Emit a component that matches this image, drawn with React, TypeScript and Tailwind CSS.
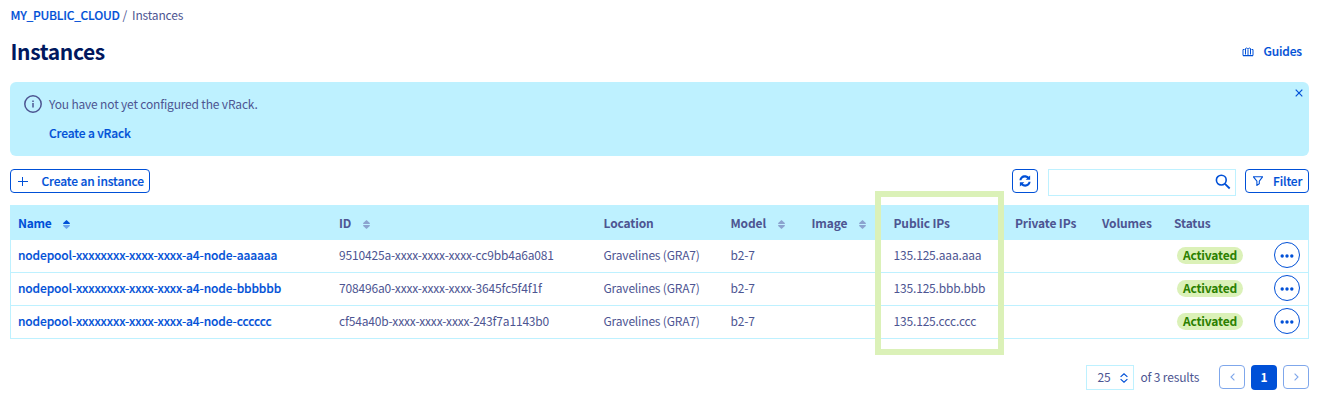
import React from "react";

const instances = [
  { name: "nodepool-xxxxxxxx-xxxx-xxxx-a4-node-aaaaaa", id: "9510425a-xxxx-xxxx-xxxx-cc9bb4a6a081", ip: "135.125.aaa.aaa" },
  { name: "nodepool-xxxxxxxx-xxxx-xxxx-a4-node-bbbbbb", id: "708496a0-xxxx-xxxx-xxxx-3645fc5f4f1f", ip: "135.125.bbb.bbb" },
  { name: "nodepool-xxxxxxxx-xxxx-xxxx-a4-node-cccccc", id: "cf54a40b-xxxx-xxxx-xxxx-243f7a1143b0", ip: "135.125.ccc.ccc" },
];

const columns = "grid grid-cols-[321px_264.5px_127px_81px_82px_121.5px_87px_72px_100px_1fr] items-center";
const strong = "font-medium tracking-[-0.14px] [-webkit-text-stroke:0.15px]";

function Sort({ active = false }: { active?: boolean }) {
  return (
    <svg width="7" height="9" viewBox="0 0 7 9" className="mt-[3px] shrink-0">
      <path d="M3.5 0 L6.8 3 V4 H.2 V3 Z" fill={active ? "#0050d7" : "#8ba3cf"} />
      <path d="M3.5 9 L6.8 6 V5 H.2 V6 Z" fill={active ? "#6ba3ec" : "#8ba3cf"} />
    </svg>
  );
}

function Header({ label, sort }: { label: string; sort?: boolean }) {
  return (
    <div className="flex items-center gap-[12px] pl-[7px] font-bold tracking-[-0.13px]">
      <span>{label}</span>
      {sort && <Sort />}
    </div>
  );
}

export default function App() {
  return (
    <div className="h-[406px] w-[1329px] overflow-hidden bg-white pr-5 pl-2.5 font-['Noto_Sans_CJK_JP','Noto_Sans_CJK_SC',sans-serif] text-[12px] leading-5 tracking-[-0.17px] whitespace-nowrap text-[#4d5592]">
      <nav className="flex h-[30px] items-center pl-[0.5px]">
        <a className="font-medium tracking-[-0.27px] text-[#0050d7] [-webkit-text-stroke:0.15px]">MY_PUBLIC_CLOUD</a>
        <span className="ml-[3px]">/</span>
        <span className="ml-[5px]">Instances</span>
      </nav>

      <header className="flex h-[52px] items-center justify-between pb-[10px]">
        <h1 className="pl-[0.5px] text-[21px] leading-7 font-bold tracking-[-0.35px] text-[#00185e]">Instances</h1>
        <a className={`flex items-center gap-[9px] pr-[7px] text-[#0050d7] ${strong}`}>
          <svg width="12" height="10" viewBox="0 0 12 10" fill="none" stroke="#0050d7" strokeWidth="1" className="mt-px">
            <path d="M2.5 2.5 H1 V8.5 H11 V2.5 H9.5" />
            <path d="M3.5 7.5 V1.5 C4.5 .7 5.5 1 6 2.2 C6.5 1 7.5 .7 8.5 1.5 V7.5 M6 2.5 V8.5" />
            <path d="M1 9 H11" strokeOpacity=".5" />
          </svg>
          Guides
        </a>
      </header>

      <section className="flex h-[74px] justify-between rounded-md bg-[#bef1ff]">
        <div className="flex pt-3 pl-[13px]">
          <svg width="20" height="20" viewBox="0 0 20 20" fill="none" stroke="#4d5592">
            <circle cx="10" cy="10" r="8.2" strokeWidth="1.5" />
            <path d="M10 9 V13.5 M10 6.5 V8" strokeWidth="1.5" />
          </svg>
          <div className="pl-[6px]">
            <p>You have not yet configured the vRack.</p>
            <a className={`mt-[9px] block text-[#0050d7] ${strong}`}>Create a vRack</a>
          </div>
        </div>
        <svg width="8" height="8" viewBox="0 0 8 8" fill="none" stroke="#0050d7" strokeWidth="1.2" className="mt-[7px] mr-1.5">
          <path d="M.7 .7 L7.3 7.3 M7.3 .7 L.7 7.3" />
        </svg>
      </section>

      <div className="mt-[13px] flex h-[27px] items-start">
        <button className={`flex h-6 w-[140px] items-center gap-[13.5px] rounded-[4px] border border-[#0050d7] pl-[7px] text-[#0050d7] ${strong}`}>
          <svg width="10" height="10" viewBox="0 0 10 10" stroke="#0050d7" strokeWidth="1" className="shrink-0">
            <path d="M0 5.5 H10 M4.5 1 V10" />
          </svg>
          Create an instance
        </button>
        <button className="ml-auto flex h-6 w-[26px] items-center justify-center rounded-[4px] border border-[#0050d7]">
          <svg width="12" height="12" viewBox="0 0 512 512" fill="#0050d7">
            <path d="M20 225 C25 105 125 15 250 15 C315 15 370 38 414 76 L475 20 V205 H285 L350 141 C322 119 291 106 252 106 C178 106 120 151 105 225 Z M492 287 C487 407 387 497 262 497 C197 497 142 474 98 436 L37 492 V307 H227 L162 371 C190 393 221 406 260 406 C334 406 392 361 407 287 Z" />
          </svg>
        </button>
        <div className="ml-2.5 flex h-[27px] w-[188px] items-start justify-end border border-[#bef1ff] pt-1 pr-1">
          <svg width="16" height="16" viewBox="0 0 16 16" fill="none" stroke="#0050d7">
            <circle cx="6.3" cy="6.1" r="4.9" strokeWidth="1.6" />
            <path d="M10 9.8 L14.7 14.5" strokeWidth="1.8" />
          </svg>
        </div>
        <button className={`ml-[9px] flex h-6 w-16 items-center gap-[10px] rounded-[4px] border border-[#0050d7] pl-[7px] text-[#0050d7] ${strong}`}>
          <svg width="10" height="10" viewBox="0 0 10 10" fill="none" stroke="#0050d7" strokeWidth="1.1" className="shrink-0">
            <path d="M.3 .7 H9.7 L6.3 5.2 V7.8 L3.9 9.4 V5.2 Z" />
          </svg>
          Filter
        </button>
      </div>

      <section className="relative mt-[9px] h-[134px] border border-t-0 border-[#bef1ff]">
        <div className={`${columns} h-[35px] bg-[#bef1ff] pt-px`}>
          <div className="flex items-center gap-[12px] pl-[7px] font-bold tracking-[-0.3px] text-[#0050d7]">
            Name <Sort active />
          </div>
          <Header label="ID" sort />
          <Header label="Location" />
          <Header label="Model" sort />
          <Header label="Image" sort />
          <Header label="Public IPs" />
          <Header label="Private IPs" />
          <Header label="Volumes" />
          <Header label="Status" />
        </div>
        {instances.map((item) => (
          <div key={item.id} className={`${columns} h-[33px] border-b border-[#bef1ff] pb-[2px]`}>
            <a className={`pl-[7px] text-[#0050d7] ${strong}`}>{item.name}</a>
            <span className="pl-[7px]">{item.id}</span>
            <span className="pl-[7px]">Gravelines (GRA7)</span>
            <span className="pl-[7px]">b2-7</span>
            <span />
            <span className="pl-[7px]">{item.ip}</span>
            <span />
            <span />
            <span className="ml-[10px] h-[17px] w-[66px] rounded-full bg-[#dbf1b8] text-center leading-[16px] font-bold tracking-[-0.15px] text-[#2b8000]">Activated</span>
            <button className="ml-[7px] flex size-[26px] items-center justify-center rounded-full border border-[#0050d7]">
              <svg width="14" height="4" viewBox="0 0 14 4" fill="#0050d7" className="mt-px">
                <circle cx="2.2" cy="2" r="1.7" />
                <circle cx="7" cy="2" r="1.7" />
                <circle cx="11.8" cy="2" r="1.7" />
              </svg>
            </button>
          </div>
        ))}
        <div className="pointer-events-none absolute -top-[14px] left-[864px] h-[164px] w-[129px] border-[6px] border-[#dbf1b8]" />
      </section>

      <footer className="mt-[26px] flex items-start justify-end">
        <div className="flex h-[25px] w-12 items-center border border-[#bef1ff] pl-[10.5px]">
          <span className="pb-[2px]">25</span>
          <svg width="8" height="10" viewBox="0 0 8 10" fill="none" stroke="#0050d7" strokeWidth="1.2" className="mt-px ml-2.5">
            <path d="M.6 3.9 L4 .8 L7.4 3.9 M.6 6.1 L4 9.2 L7.4 6.1" />
          </svg>
        </div>
        <span className="mt-[2px] ml-[6.5px] w-[60.5px]">of 3 results</span>
        <button className="ml-[18px] flex h-6 w-[26px] items-center justify-center rounded-[4px] border border-[#7fa7eb]">
          <svg width="5" height="8" viewBox="0 0 5 8" fill="none" stroke="#7fa7eb" strokeWidth="1.1"><path d="M4.4 .6 L1 4 L4.4 7.4" /></svg>
        </button>
        <button className="ml-1.5 h-[25px] w-[26px] rounded-[4px] bg-[#0050d7] pb-[2px] leading-[23px] font-bold text-white">1</button>
        <button className="ml-1.5 flex h-6 w-[26px] items-center justify-center rounded-[4px] border border-[#7fa7eb]">
          <svg width="5" height="8" viewBox="0 0 5 8" fill="none" stroke="#7fa7eb" strokeWidth="1.1"><path d="M.6 .6 L4 4 L.6 7.4" /></svg>
        </button>
      </footer>
    </div>
  );
}
